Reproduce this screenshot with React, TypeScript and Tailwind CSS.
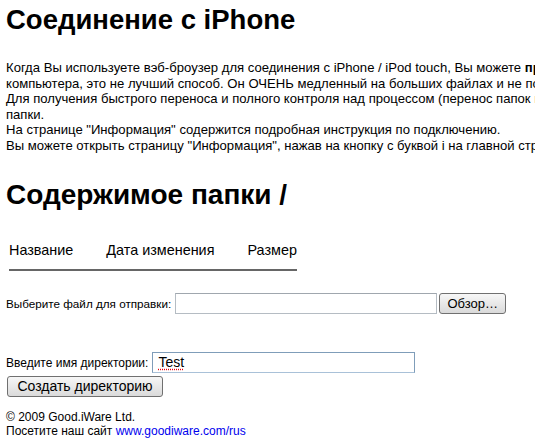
import React from 'react';

const App: React.FC = () => {
  const lines = [
    <>
      Когда Вы используете вэб-броузер для соединения с iPhone / iPod touch, Вы можете{' '}
      <b>просматривать и загружать файлы</b>, но для передачи файлов с/на
    </>,
    <>компьютера, это не лучший способ. Он ОЧЕНЬ медленный на больших файлах и не позволяет передавать папки целиком.</>,
    <>Для получения быстрого переноса и полного контроля над процессом (перенос папок целиком) используйте подключение через сетевые</>,
    <>папки.</>,
    <>На странице "Информация" содержится подробная инструкция по подключению.</>,
    <>Вы можете открыть страницу "Информация", нажав на кнопку с буквой i на главной странице программы.</>,
  ];

  return (
    <div className="w-[535px] h-[442px] overflow-hidden bg-white text-black pl-[6px] font-['Liberation_Sans',Arial,sans-serif]">
      <h1 className="pt-[4px] text-[27.5px] leading-[32px] font-bold">Соединение с iPhone</h1>

      <div className="mt-[24px] text-[13.1px] leading-[15.5px]">
        {lines.map((line, i) => (
          <div key={i} className="whitespace-nowrap">
            {line}
          </div>
        ))}
      </div>

      <h2 className="mt-[26px] text-[28px] leading-[32px] font-bold">Содержимое папки /</h2>

      {/* table header */}
      <div className="mt-[31px] ml-[3px] inline-flex gap-[33px] border-b-2 border-[#666] pb-[11px] text-[14.4px] leading-[16px]">
        <span>Название</span>
        <span>Дата изменения</span>
        <span>Размер</span>
      </div>

      <div className="mt-[22px] flex items-center gap-[4px] text-[11.7px]">
        <span>Выберите файл для отправки:</span>
        <div className="w-[262px] h-[21px] border border-[#b5bcc3] border-t-[#a0a7ae] bg-white" />
        <button className="ml-[-2px] w-[67px] h-[21px] rounded-[3px] border border-[#707070] bg-gradient-to-b from-[#f7f7f7] to-[#dadada] text-[13px] leading-[19px] text-black">
          Обзор…
        </button>
      </div>

      <div className="mt-[38px] flex items-center gap-[4px] text-[12px]">
        <span>Введите имя директории:</span>
        <div className="w-[263px] h-[21px] border border-[#7f9db9] border-b-[#a9c1d8] bg-white flex items-center px-[5px] text-[14px]">
          <span className="underline decoration-dotted decoration-red-600 underline-offset-2">Test</span>
        </div>
      </div>
      <button className="mt-[3px] ml-[1px] w-[156px] h-[21px] rounded-[3px] border border-[#707070] bg-gradient-to-b from-[#f7f7f7] to-[#dadada] text-[14px] leading-[19px] text-black">
        Создать директорию
      </button>

      <div className="mt-[12px] text-[12px] leading-[14px]">
        <div>© 2009 Good.iWare Ltd.</div>
        <div>
          Посетите наш сайт <a href="#" className="text-[#0000ee]">www.goodiware.com/rus</a>
        </div>
      </div>
    </div>
  );
};

export default App;
